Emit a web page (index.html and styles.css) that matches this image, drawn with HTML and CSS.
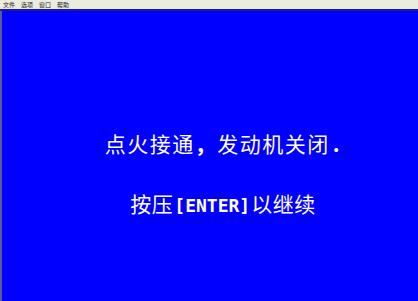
FILE: index.html
```html
<!DOCTYPE html>
<html lang="zh-CN">
<head>
<meta charset="utf-8">
<title>点火接通</title>
<link rel="stylesheet" href="styles.css">
</head>
<body>
<div class="menubar">
  <span class="menu-item">文件</span>
  <span class="menu-item">选项</span>
  <span class="menu-item">窗口</span>
  <span class="menu-item">帮助</span>
</div>
<div class="rule"></div>
<main class="screen">
  <p class="line line-1">点火接通<span class="comma">，</span>发动机关闭<span class="dot">.</span></p>
  <p class="line line-2">按压<span class="key">[ENTER]</span>以继续</p>
</main>
</body>
</html>
```
FILE: styles.css
```css
html, body {
  margin: 0;
  padding: 0;
  height: 100%;
}
body {
  background: #0000fe;
  display: flex;
  flex-direction: column;
  font-family: "Noto Sans CJK SC", "DejaVu Sans", sans-serif;
}
.menubar {
  height: 9px;
  background: #e9ecdf;
  display: flex;
  align-items: center;
  gap: 6px;
  padding-left: 3px;
  font-size: 6px;
  line-height: 9px;
  color: #222;
}
.rule {
  height: 2px;
  background: #1a1a9a;
}
.screen {
  flex: 1;
  display: flex;
  flex-direction: column;
  align-items: center;
  padding-top: 118px;
  padding-left: 26px;
  border-left: 2px solid #5a5a9a;
}
.line {
  margin: 0;
  color: #fff;
  font-size: 21px;
  line-height: 28px;
  white-space: nowrap;
}
.line-1 {
  letter-spacing: 1.5px;
}
.comma {
  font-weight: bold;
}
.dot {
  font-weight: bold;
  margin-left: 3px;
}
.line-2 {
  margin-top: 32px;
  letter-spacing: 0.5px;
}
.key {
  font-family: "DejaVu Sans Mono", monospace;
  font-weight: bold;
  font-size: 18px;
  letter-spacing: 0;
  margin: 0 1px;
}
```
